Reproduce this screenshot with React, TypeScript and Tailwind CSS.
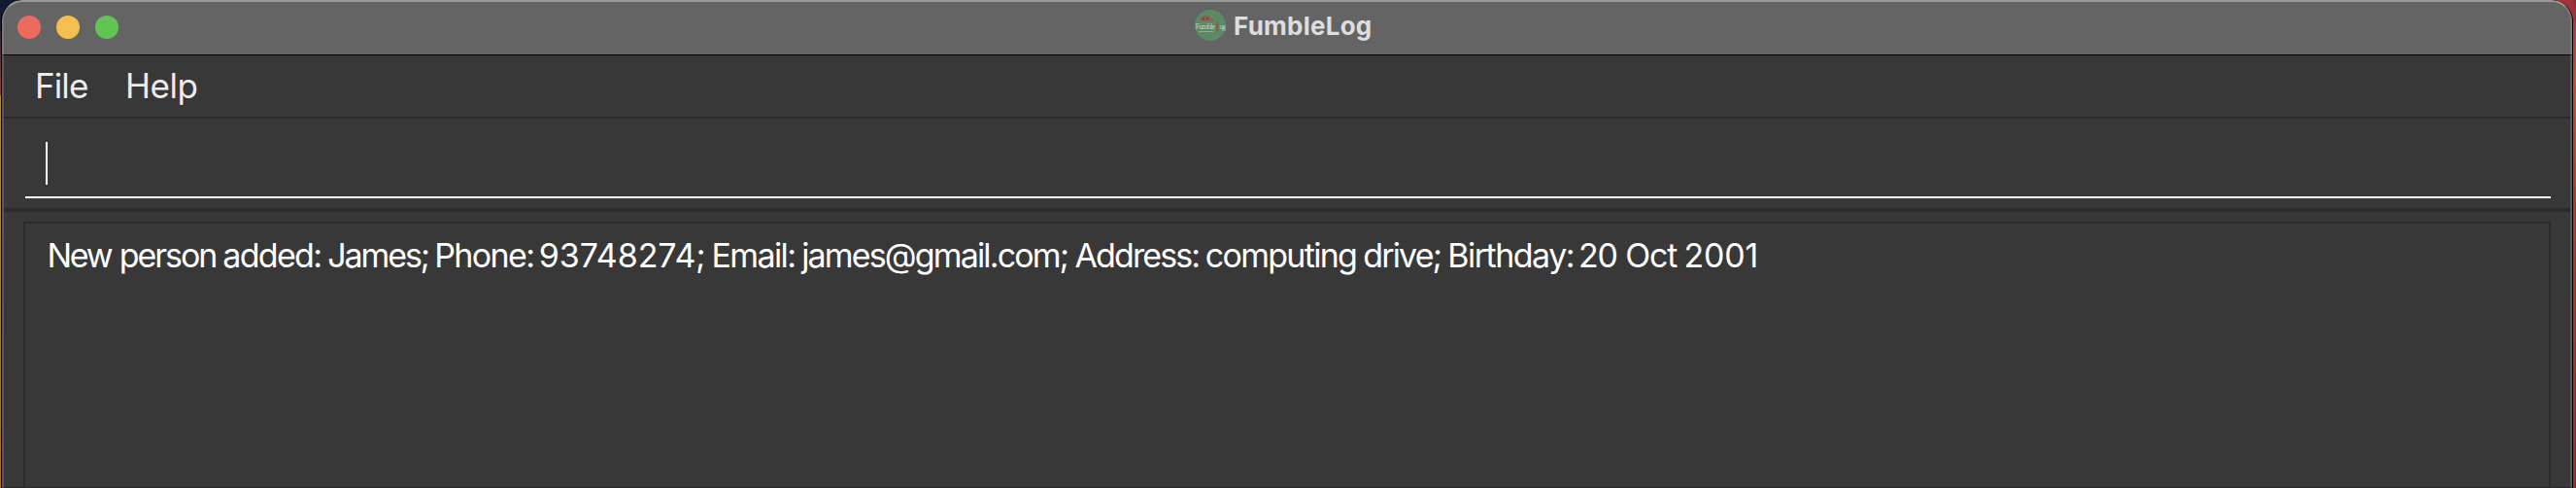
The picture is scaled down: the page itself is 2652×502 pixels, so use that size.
import React from "react";

const words = [
  { text: "New", style: "w-[74.4px] tracking-[-2.2px]" },
  { text: "person", style: "w-[106.5px] tracking-[-2.05px]" },
  { text: "added:", style: "w-[108px] tracking-[-1.7px]" },
  { text: "James;", style: "w-[110px] tracking-[-2.1px]" },
  { text: "Phone:", style: "w-[107.5px] tracking-[-1.65px]" },
  { text: "93748274;", style: "w-[177.6px] tracking-[-0.1px]" },
  { text: "Email:", style: "w-[92.8px] tracking-[-1.6px]" },
  { text: "james@gmail.com;", style: "w-[281.4px] tracking-[-1.85px]" },
  { text: "Address:", style: "w-[134.2px] tracking-[-1.9px]" },
  { text: "computing", style: "w-[162.5px] tracking-[-1.7px]" },
  { text: "drive;", style: "w-[87px] tracking-[-1.85px]" },
  { text: "Birthday:", style: "w-[134.8px] tracking-[-1.5px]" },
  { text: "20", style: "w-[48.2px] tracking-[-1.2px]" },
  { text: "Oct", style: "w-[60.2px] tracking-[-1.2px]" },
  { text: "2001", style: "w-[80px] tracking-[-0.2px]" },
];

function Logo() {
  return (
    <svg className="h-8 w-8" viewBox="0 0 32 32">
      <circle cx="16" cy="16" r="16" fill="#5b8a66" />
      <path d="M5 11.5l1-3.5 4-2 5 .5 2 2 3 2.5-3 1.5-3-1.5-3 1.5-3-1z" fill="#93604a" />
      <path d="M8 9.5h2M12 9h2" stroke="#4b4a40" strokeWidth="1.4" />
      <text x="0.5" y="20" fontSize="8" fontFamily="Liberation Serif, serif" fill="#c3cfc5" textLength="20.5">Fumble</text>
      <path d="M23.2 12.5v10" stroke="#94553f" strokeWidth="2" />
      <text x="25.5" y="20" fontSize="8" fontFamily="Liberation Serif, serif" fill="#c3cfc5" textLength="6.5">og</text>
      <path d="M4 22.5h15" stroke="#93ad99" strokeWidth="1" />
    </svg>
  );
}

export default function App() {
  return (
    <div className="flex h-[502px] w-[2652px] overflow-hidden bg-[linear-gradient(90deg,#101c35_0%,#101c35_50%,#a0343c_50%,#a0343c_100%)] font-['Inter',sans-serif]">
      <div className="w-px bg-[linear-gradient(180deg,#101c35_0px,#101c35_20px,#7a3338_70px,#8a3a2a_97px,#c08a28_99px,#b07a20_380px,#b8741c_502px)]" />
      <div className="flex w-[2648px] rounded-t-[22px] bg-black px-px">
        <div className="flex w-[2646px] flex-col overflow-hidden rounded-t-[21px] bg-[#383838]">
          <header className="flex h-14 shrink-0 items-center rounded-t-[21px] border-x-2 border-t-2 border-x-[#7a7a7a] border-t-[#999999] bg-[#646464] pb-0.5 pl-3.5">
            <div className="flex w-[1212px] gap-4">
              <span className="h-6 w-6 rounded-full bg-[#ed6a5e]" />
              <span className="h-6 w-6 rounded-full bg-[#f5bf4f]" />
              <span className="h-6 w-6 rounded-full bg-[#61c554]" />
            </div>
            <div className="flex items-center gap-2 pb-1">
              <Logo />
              <h1 className="mt-0.5 text-[26px] leading-8 font-bold tracking-[0.25px] text-[#dedede]">FumbleLog</h1>
            </div>
          </header>
          <div className="flex h-[446px] flex-col border-x-2 border-t border-b border-x-[#595959] border-t-black border-b-[#2e2630]">
            <nav className="flex h-[65px] shrink-0 border-b-2 border-[#2b2b2b] pt-[11px] pl-8 text-[35px] leading-10 text-[#ececec]">
              <span className="w-[93px] tracking-[-0.9px]">File</span>
              <span className="tracking-[-0.5px]">Help</span>
            </nav>
            <div className="flex h-24 shrink-0 flex-col border-b-4 border-[#2b2b2b] pr-5 pl-[22px]">
              <div className="h-[82px] border-b-2 border-white pt-6 pl-[21px]">
                <div className="h-11 w-0.5 bg-white" />
              </div>
            </div>
            <main className="flex grow px-5 pt-2.5">
              <section className="grow border-x-2 border-t-2 border-[#2b2b2b] pt-[13px] pl-[22.4px]">
                <p className="flex text-[34px] leading-10 whitespace-pre text-white">
                  {words.map((word) => (
                    <span key={word.text} className={word.style}>
                      {word.text + " "}
                    </span>
                  ))}
                </p>
              </section>
            </main>
          </div>
        </div>
      </div>
      <div className="w-[3px] bg-[linear-gradient(180deg,#8a2c44_0px,#a8403a_30px,#c0502e_90px,#a04428_200px,#8a3424_502px)]" />
    </div>
  );
}
